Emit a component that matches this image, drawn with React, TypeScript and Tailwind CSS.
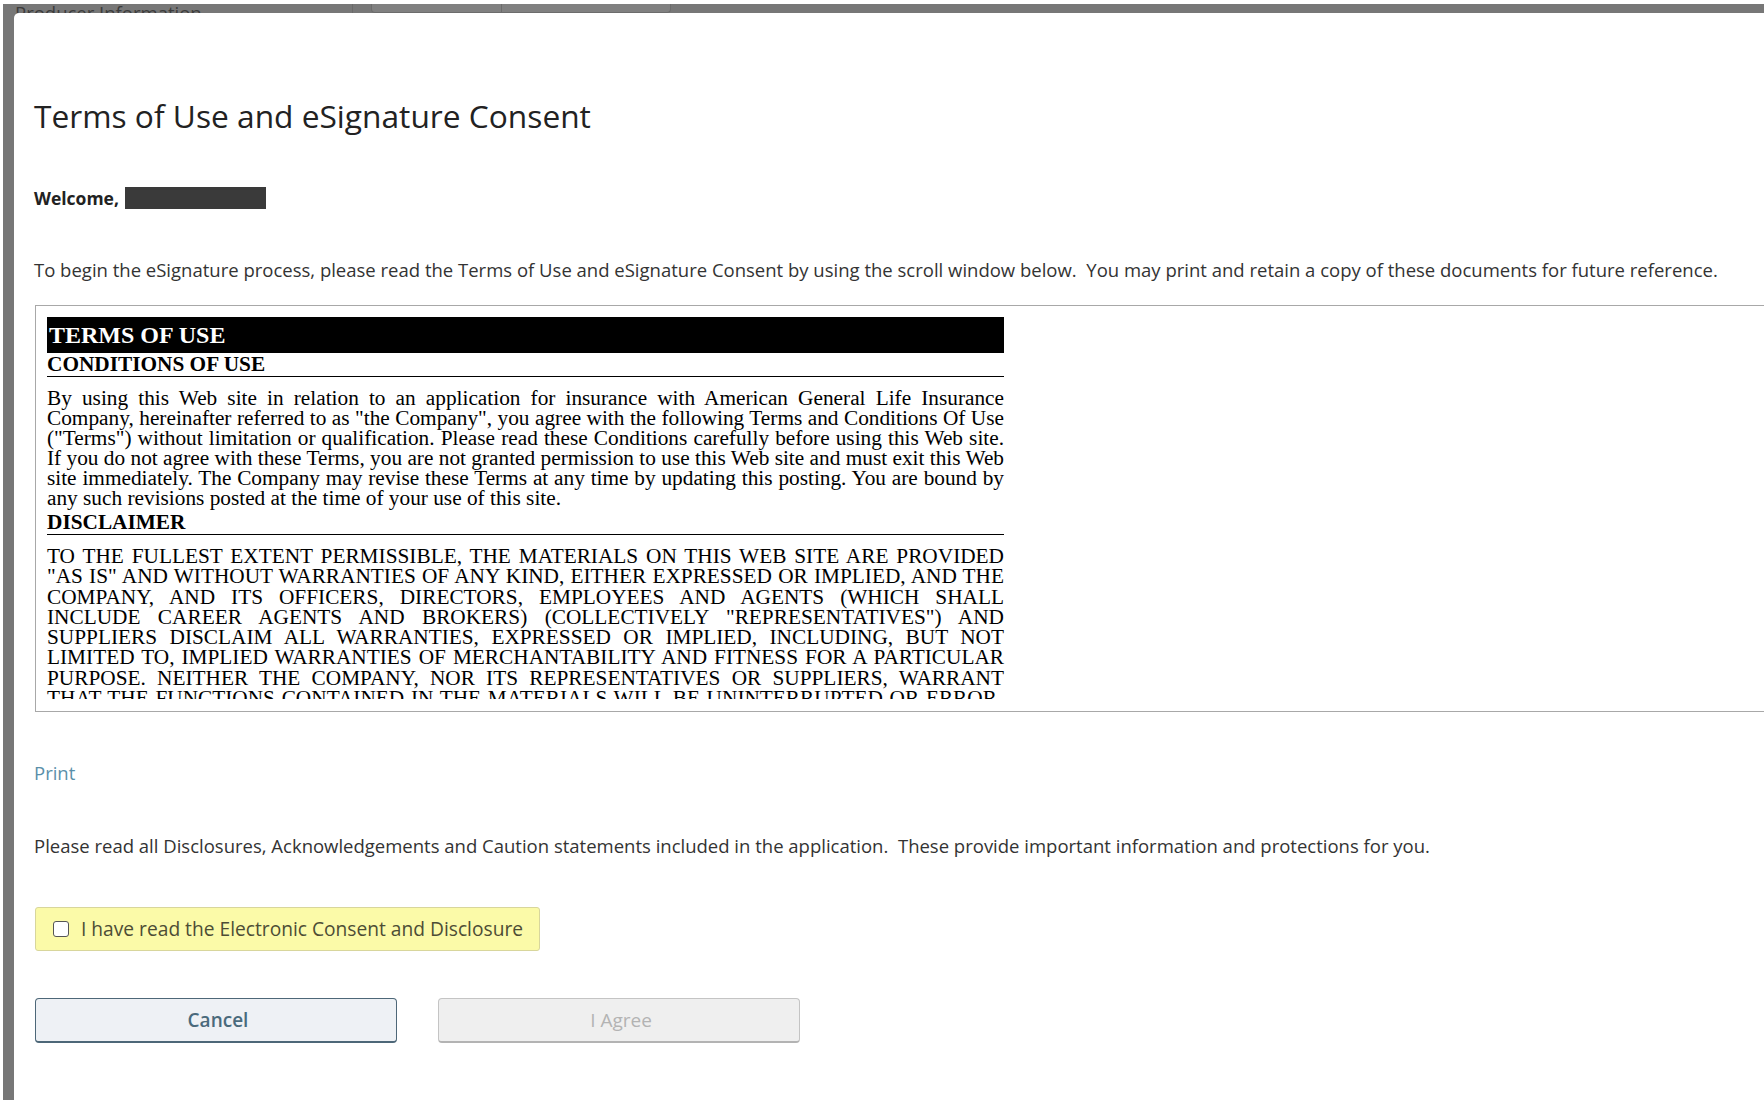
const conditions = [
  "By using this Web site in relation to an application for insurance with American General Life Insurance",
  'Company, hereinafter referred to as "the Company", you agree with the following Terms and Conditions Of Use',
  '("Terms") without limitation or qualification. Please read these Conditions carefully before using this Web site.',
  "If you do not agree with these Terms, you are not granted permission to use this Web site and must exit this Web",
  "site immediately. The Company may revise these Terms at any time by updating this posting. You are bound by",
  "any such revisions posted at the time of your use of this site.",
];

const disclaimer = [
  "TO THE FULLEST EXTENT PERMISSIBLE, THE MATERIALS ON THIS WEB SITE ARE PROVIDED",
  '"AS IS" AND WITHOUT WARRANTIES OF ANY KIND, EITHER EXPRESSED OR IMPLIED, AND THE',
  "COMPANY, AND ITS OFFICERS, DIRECTORS, EMPLOYEES AND AGENTS (WHICH SHALL",
  'INCLUDE CAREER AGENTS AND BROKERS) (COLLECTIVELY "REPRESENTATIVES") AND',
  "SUPPLIERS DISCLAIM ALL WARRANTIES, EXPRESSED OR IMPLIED, INCLUDING, BUT NOT",
  "LIMITED TO, IMPLIED WARRANTIES OF MERCHANTABILITY AND FITNESS FOR A PARTICULAR",
  "PURPOSE. NEITHER THE COMPANY, NOR ITS REPRESENTATIVES OR SUPPLIERS, WARRANT",
  "THAT THE FUNCTIONS CONTAINED IN THE MATERIALS WILL BE UNINTERRUPTED OR ERROR-",
  "FREE, THAT DEFECTS WILL BE CORRECTED, OR THAT THIS SITE OR THE SERVER THAT MAKES",
  "IT AVAILABLE ARE FREE OF VIRUSES OR OTHER HARMFUL COMPONENTS.",
];

// justified lines, the last one of a paragraph left aligned
const Lines = ({ lines, leading }: { lines: string[]; leading: string }) => (
  <div className={`text-[21.3px] ${leading}`}>
    {lines.map((l, i) => (
      <div
        key={i}
        className={`whitespace-nowrap ${i < lines.length - 1 ? "text-justify [text-align-last:justify]" : ""}`}
      >
        {l}
      </div>
    ))}
  </div>
);

const TermsDocument = () => (
  <div className="w-[957px] font-['Liberation_Serif',serif] text-black">
    <div className="h-[36px] bg-black pl-[2px] text-[24px] font-bold leading-[36px] text-white">TERMS OF USE</div>
    <h2 className="border-b border-black pb-[2px] pt-[1px] text-[21.3px] font-bold leading-[20px]">CONDITIONS OF USE</h2>
    <div className="mt-[11px]">
      <Lines lines={conditions} leading="leading-[20px]" />
    </div>
    <h2 className="mt-[3px] border-b border-black pb-[2px] pt-px text-[21.3px] font-bold leading-[20px]">DISCLAIMER</h2>
    <div className="mt-[11px]">
      <Lines lines={disclaimer} leading="leading-[20.25px]" />
    </div>
  </div>
);

const App = () => (
  <div className="relative h-[1104px] w-full overflow-hidden bg-white font-['Open_Sans',sans-serif]">
    {/* page behind the overlay */}
    <div className="ml-[3px] mt-[4px] h-[1096px] bg-[#777777]">
      <div className="flex items-start text-[#3c3c3c]">
        <span className="pl-[12px] text-[18.5px] leading-[18px]">Producer Information</span>
        <div className="ml-[150px] h-[10px] w-px bg-[#6a6a6a]" />
        <div className="ml-[18px] flex h-[9px] w-[300px] rounded-b-[4px] border border-t-0 border-[#6c6c6c] bg-[#808080]">
          <div className="w-[130px] border-r border-[#6c6c6c]" />
        </div>
      </div>
    </div>

    {/* modal */}
    <div className="absolute left-[14px] top-[13px] h-[1100px] w-[1800px] rounded-tl-[5px] bg-white pl-[20px] pt-[82px] text-[#333]">
      <h1 className="text-[31.7px] font-normal leading-[42px] text-[#222]">Terms of Use and eSignature Consent</h1>

      <div className="mt-[49px] flex h-[24px] items-center">
        <span className="text-[17.5px] font-bold leading-[24px] text-[#222]">Welcome,</span>
        <span className="ml-[6px] h-[22px] w-[141px] bg-[#3a3a3a]" />
      </div>

      <p className="mt-[48px] text-[18.5px] leading-[24px]">
        To begin the eSignature process, please read the Terms of Use and eSignature Consent by using the scroll window
        below.&nbsp; You may print and retain a copy of these documents for future reference.
      </p>

      <div className="ml-px mt-[23px] w-[1760px] border border-[#a8a8a8] pb-[12px]">
        <div className="h-[393px] overflow-hidden pl-[11px] pt-[11px]">
          <TermsDocument />
        </div>
      </div>

      <a className="mt-[49px] block text-[18.5px] leading-[24px] text-[#5a8fa9]" href="#">
        Print
      </a>

      <p className="mt-[49px] text-[18.5px] leading-[24px]">
        Please read all Disclosures, Acknowledgements and Caution statements included in the application.&nbsp; These
        provide important information and protections for you.
      </p>

      <label className="ml-px mt-[49px] flex h-[44px] w-[505px] items-center rounded-[3px] border border-[#d8d69c] bg-[#fbfaa8] pl-[17px] text-[19.2px] text-[#4d4d35]">
        <input type="checkbox" className="h-[16px] w-[16px] appearance-none rounded-[3px] border border-[#555] bg-white" />
        <span className="ml-[12px]">I have read the Electronic Consent and Disclosure</span>
      </label>

      <div className="ml-px mt-[47px] flex gap-[41px]">
        <button className="h-[45px] w-[362px] rounded-[4px] border border-b-2 border-[#4d6778] bg-[#eef1f5] pl-[4px] text-[19px] font-semibold text-[#4a6a7c]">
          Cancel
        </button>
        <button
          disabled
          className="h-[45px] w-[362px] rounded-[4px] border border-b-2 border-[#c4c4c4] border-b-[#b3b3b3] bg-[#efefef] pl-[4px] text-[19px] text-[#b3b3b3]"
        >
          I Agree
        </button>
      </div>
    </div>
  </div>
);

export default App;
